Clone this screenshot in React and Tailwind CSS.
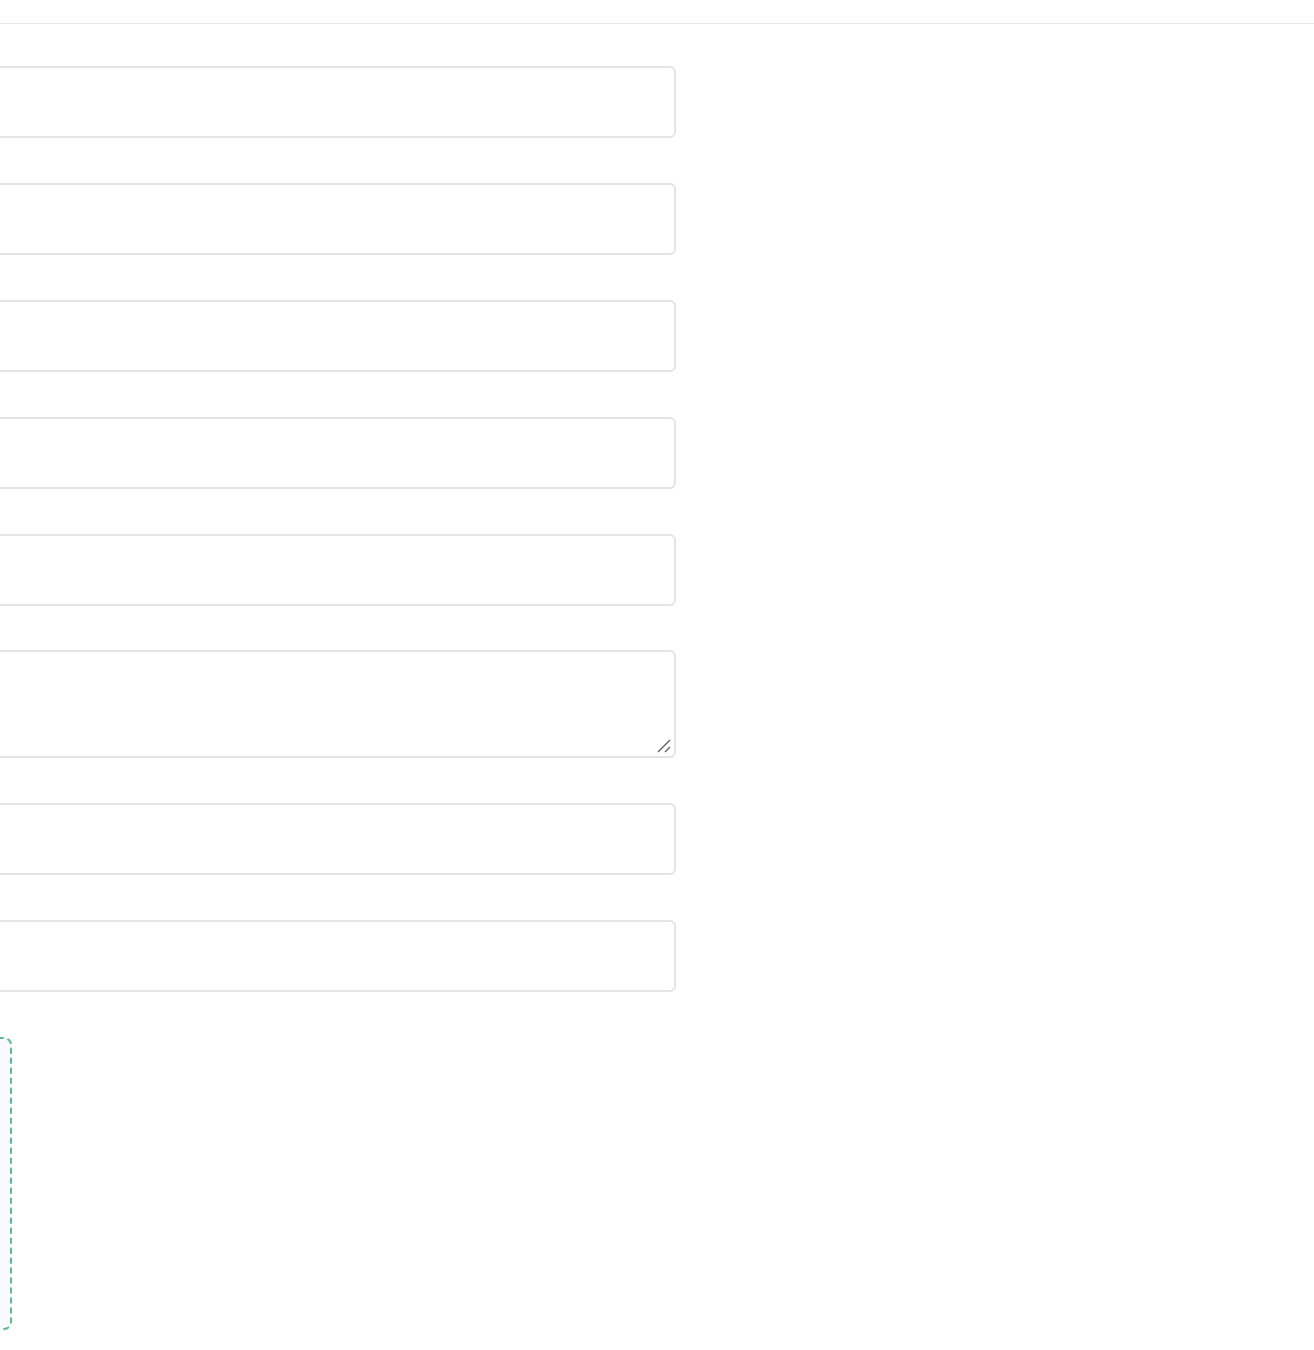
export default function App() {
  const fields = ["name", "email", "phone", "company", "website"];
  const more = ["city", "country"];

  return (
    <div className="min-h-[1350px] bg-white font-['Inter',sans-serif] overflow-hidden">
      <div className="h-6 border-b border-[#e8e8ee]"></div>
      <div className="-ml-[400px] w-[1076px] pt-[42px]">
        {fields.map((f, i) => (
          <input
            key={f}
            type="text"
            className={
              i === fields.length - 1
                ? "block w-full h-[72px] mb-[44px] rounded-md border-2 border-[#e3e3e8] bg-white outline-none"
                : "block w-full h-[72px] mb-[45px] rounded-md border-2 border-[#e3e3e8] bg-white outline-none"
            }
          />
        ))}
        <div className="relative mb-[45px]">
          <textarea className="block w-full h-[108px] rounded-md border-2 border-[#e3e3e8] bg-white outline-none resize-none"></textarea>
          <svg
            className="absolute right-[4px] bottom-[4px]"
            width="16"
            height="16"
            viewBox="0 0 16 16"
          >
            <path d="M2 14 L14 2" stroke="#5a5a5a" strokeWidth="1.3" />
            <path d="M9 14 L14 9" stroke="#5a5a5a" strokeWidth="1.3" />
          </svg>
        </div>
        {more.map((f) => (
          <input
            key={f}
            type="text"
            className="block w-full h-[72px] mb-[45px] rounded-md border-2 border-[#e3e3e8] bg-white outline-none"
          />
        ))}
        <div className="w-[412px] h-[293px] rounded-lg border-2 border-dashed border-[#5dbb8a] bg-[#f8fafd]"></div>
      </div>
    </div>
  );
}
